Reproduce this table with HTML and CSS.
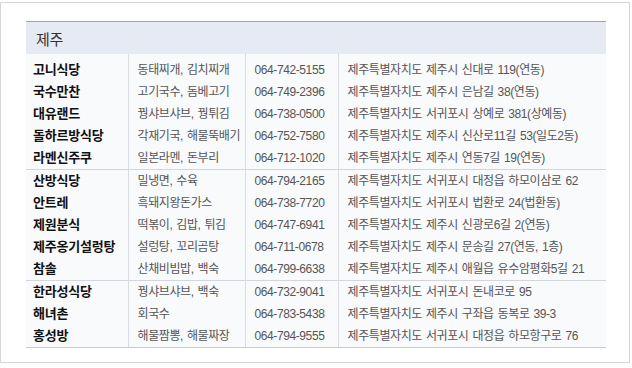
FILE: index.html
```html
<!DOCTYPE html>
<html lang="ko">
<head>
<meta charset="utf-8">
<title>제주</title>
<link rel="stylesheet" href="styles.css">
</head>
<body>
<div class="frame">
  <table class="list">
    <colgroup>
      <col class="c-name"><col class="c-menu"><col class="c-tel"><col class="c-addr">
    </colgroup>
    <thead>
      <tr><th colspan="4">제주</th></tr>
    </thead>
    <tbody class="group first">
      <tr><td class="name">고니식당</td><td>동태찌개, 김치찌개</td><td>064-742-5155</td><td>제주특별자치도 제주시 신대로 119(연동)</td></tr>
      <tr><td class="name">국수만찬</td><td>고기국수, 돔베고기</td><td>064-749-2396</td><td>제주특별자치도 제주시 은남길 38(연동)</td></tr>
      <tr><td class="name">대유랜드</td><td>꿩샤브샤브, 꿩튀김</td><td>064-738-0500</td><td>제주특별자치도 서귀포시 상예로 381(상예동)</td></tr>
      <tr><td class="name">돌하르방식당</td><td>각재기국, 해물뚝배기</td><td>064-752-7580</td><td>제주특별자치도 제주시 신산로11길 53(일도2동)</td></tr>
      <tr><td class="name">라멘신주쿠</td><td>일본라멘, 돈부리</td><td>064-712-1020</td><td>제주특별자치도 제주시 연동7길 19(연동)</td></tr>
    </tbody>
    <tbody class="group">
      <tr><td class="name">산방식당</td><td>밀냉면, 수육</td><td>064-794-2165</td><td>제주특별자치도 서귀포시 대정읍 하모이삼로 62</td></tr>
      <tr><td class="name">안트레</td><td>흑돼지왕돈가스</td><td>064-738-7720</td><td>제주특별자치도 서귀포시 법환로 24(법환동)</td></tr>
      <tr><td class="name">제원분식</td><td>떡볶이, 김밥, 튀김</td><td>064-747-6941</td><td>제주특별자치도 제주시 신광로6길 2(연동)</td></tr>
      <tr><td class="name">제주옹기설렁탕</td><td>설렁탕, 꼬리곰탕</td><td>064-711-0678</td><td>제주특별자치도 제주시 문송길 27(연동, 1층)</td></tr>
      <tr><td class="name">참솔</td><td>산채비빔밥, 백숙</td><td>064-799-6638</td><td>제주특별자치도 제주시 애월읍 유수암평화5길 21</td></tr>
    </tbody>
    <tbody class="group last">
      <tr><td class="name">한라성식당</td><td>꿩샤브샤브, 백숙</td><td>064-732-9041</td><td>제주특별자치도 서귀포시 돈내코로 95</td></tr>
      <tr><td class="name">해녀촌</td><td>회국수</td><td>064-783-5438</td><td>제주특별자치도 제주시 구좌읍 동복로 39-3</td></tr>
      <tr><td class="name">홍성방</td><td>해물짬뽕, 해물짜장</td><td>064-794-9555</td><td>제주특별자치도 서귀포시 대정읍 하모항구로 76</td></tr>
    </tbody>
  </table>
</div>
</body>
</html>
```
FILE: styles.css
```css
html, body {
  margin: 0;
  padding: 0;
  background: #ffffff;
}
body {
  padding-top: 2px;
  font-family: "Liberation Sans", "Noto Sans CJK KR", sans-serif;
}
.frame {
  box-sizing: border-box;
  width: 630px;
  height: 361px;
  border: 1px solid #d6d6d6;
  padding: 18px 0 0 25px;
}
.list {
  width: 580px;
  border-collapse: collapse;
  table-layout: fixed;
  background: #f9fafc;
}
.c-name { width: 102px; }
.c-menu { width: 117px; }
.c-tel { width: 93px; }
.c-addr { width: 268px; }

.list th {
  height: 32px;
  padding: 0 0 0 10px;
  text-align: left;
  font-weight: normal;
  font-size: 15px;
  color: #333;
  background: #e6eaf3;
  border-top: 1px solid #9ba5b9;
  letter-spacing: -0.3px;
}
.list td {
  height: 22px;
  padding: 0 0 0 9px;
  font-size: 12px;
  color: #555;
  letter-spacing: -0.4px;
  word-spacing: 1px;
  white-space: nowrap;
  line-height: 22px;
  border-left: 1px solid #d9dbe0;
  vertical-align: middle;
}
.list td:first-child {
  border-left: none;
  padding-left: 7px;
}
.list td.name {
  font-size: 13px;
  font-weight: bold;
  color: #111;
  letter-spacing: -0.2px;
  word-spacing: 0;
}
.group + .group tr:first-child td {
  border-top: 1px solid #d3d6dd;
}
.group.first tr:first-child td {
  height: 27px;
  padding-top: 5px;
  box-sizing: border-box;
  line-height: 22px;
}
.group.last tr:last-child td {
  border-bottom: 1px solid #c9cbd0;
}
```
